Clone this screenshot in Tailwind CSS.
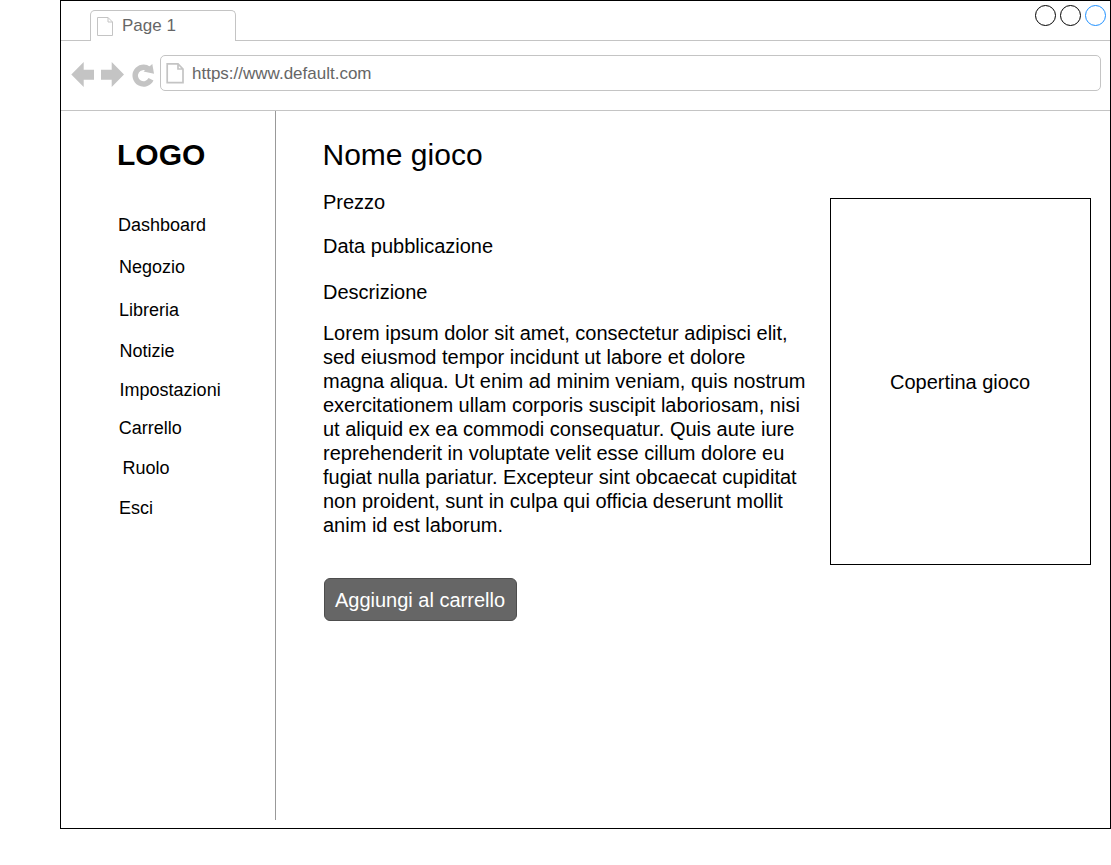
<!DOCTYPE html>
<html lang="it">
<head>
<meta charset="utf-8">
<title>Page 1</title>
<script src="https://cdn.jsdelivr.net/npm/@tailwindcss/browser@4"></script>
</head>
<body class="bg-white font-['Liberation_Sans',Arial,sans-serif] text-black">
<div class="ml-[60px] flex h-[829px] w-[1051px] flex-col border border-black">
  <!-- Tab strip -->
  <div class="flex h-10 shrink-0 items-end border-b border-[#c4c4c4]">
    <div class="-mb-px ml-[29px] flex h-[31px] w-[146px] rounded-t-[5px] border border-b-0 border-[#c4c4c4] bg-white pl-1.5 pt-1.5">
      <svg class="h-5 w-[17px] shrink-0" viewBox="0 0 17 20" fill="none" stroke="#c4c4c4"><path d="M.5 .5H11L15.5 5V18.5H.5ZM11 .5V5H15.5"/></svg>
      <span class="ml-2 text-[17px] leading-[18px] text-[#666]">Page 1</span>
    </div>
    <div class="mb-3.5 ml-auto mr-1 flex gap-1">
      <span class="size-[21px] rounded-full border border-black"></span>
      <span class="size-[21px] rounded-full border border-black"></span>
      <span class="size-[21px] rounded-full border border-[#1e90ff]"></span>
    </div>
  </div>
  <!-- Address bar -->
  <div class="flex h-[70px] shrink-0 items-start border-b border-[#c4c4c4] pl-2.5 pr-[9px] pt-3.5">
    <svg class="h-9 w-[89px] shrink-0" viewBox="71 55 89 36" fill="#c4c4c4">
      <path d="M71.3 74.5 83.700 62V69.700H94V79.700H83.700V87Z"/>
      <path d="M124 74.5 111.700 62V69.700H101V79.700H111.700V87Z"/>
      <path d="M151 79.300A8.300 8.300 0 1 1 148.500 69" fill="none" stroke="#c4c4c4" stroke-width="5.500"/>
      <path d="M152.300 64 154 73.800 143.500 71.600Z"/>
    </svg>
    <div class="flex h-9 flex-1 rounded-[5px] border border-[#c4c4c4] pl-[5px] pt-[7px]">
      <svg class="h-[21px] w-[18px] shrink-0" viewBox="0 0 18 21" fill="none" stroke="#c4c4c4" stroke-width="1.700"><path d="M1.200 .9H12L17 6V19.600H1.200ZM12 .9V6H17"/></svg>
      <span class="ml-2 text-[17px] leading-[22px] text-[#666]">https://www.default.com</span>
    </div>
  </div>
  <div class="flex flex-1">
    <!-- Sidebar -->
    <nav class="h-[709px] w-[215px] border-r border-[#999] pt-[26px] pl-[55px] text-[18px] leading-[22px]">
      <div class="ml-px text-[30px] font-bold leading-9">LOGO</div>
      <div class="ml-[2px] mt-[41px]">Dashboard</div>
      <div class="ml-[3px] mt-5">Negozio</div>
      <div class="ml-[3px] mt-[21px]">Libreria</div>
      <div class="ml-[3.500px] mt-[19px]">Notizie</div>
      <div class="ml-[3.600px] mt-[17px]">Impostazioni</div>
      <div class="ml-[2.700px] mt-4">Carrello</div>
      <div class="ml-[6.500px] mt-[18px]">Ruolo</div>
      <div class="ml-[3px] mt-[18px]">Esci</div>
    </nav>
    <!-- Game details -->
    <main class="flex flex-1 pl-[47px] pr-[19px] text-[20px] leading-6">
      <section class="w-[507px] shrink-0 pt-[26px]">
        <h1 class="-ml-[0.500px] text-[30px] leading-9">Nome gioco</h1>
        <p class="mt-[17px]">Prezzo</p>
        <p class="mt-5">Data pubblicazione</p>
        <p class="mt-[22px]">Descrizione</p>
        <p class="mt-[17px] whitespace-nowrap">Lorem ipsum dolor sit amet, consectetur adipisci elit,<br>sed eiusmod tempor incidunt ut labore et dolore<br>magna aliqua. Ut enim ad minim veniam, quis nostrum<br>exercitationem ullam corporis suscipit laboriosam, nisi<br>ut aliquid ex ea commodi consequatur. Quis aute iure<br>reprehenderit in voluptate velit esse cillum dolore eu<br>fugiat nulla pariatur. Excepteur sint obcaecat cupiditat<br>non proident, sunt in culpa qui officia deserunt mollit<br>anim id est laborum.</p>
        <button class="ml-px mt-[41px] flex h-[43px] w-[193px] items-center justify-center rounded-md border border-[#4d4d4d] bg-[#666] pr-px text-white">Aggiungi al carrello</button>
      </section>
      <div class="mt-[87px] flex h-[367px] w-[261px] items-center justify-center border border-black pr-px">Copertina gioco</div>
    </main>
  </div>
</div>
</body>
</html>
